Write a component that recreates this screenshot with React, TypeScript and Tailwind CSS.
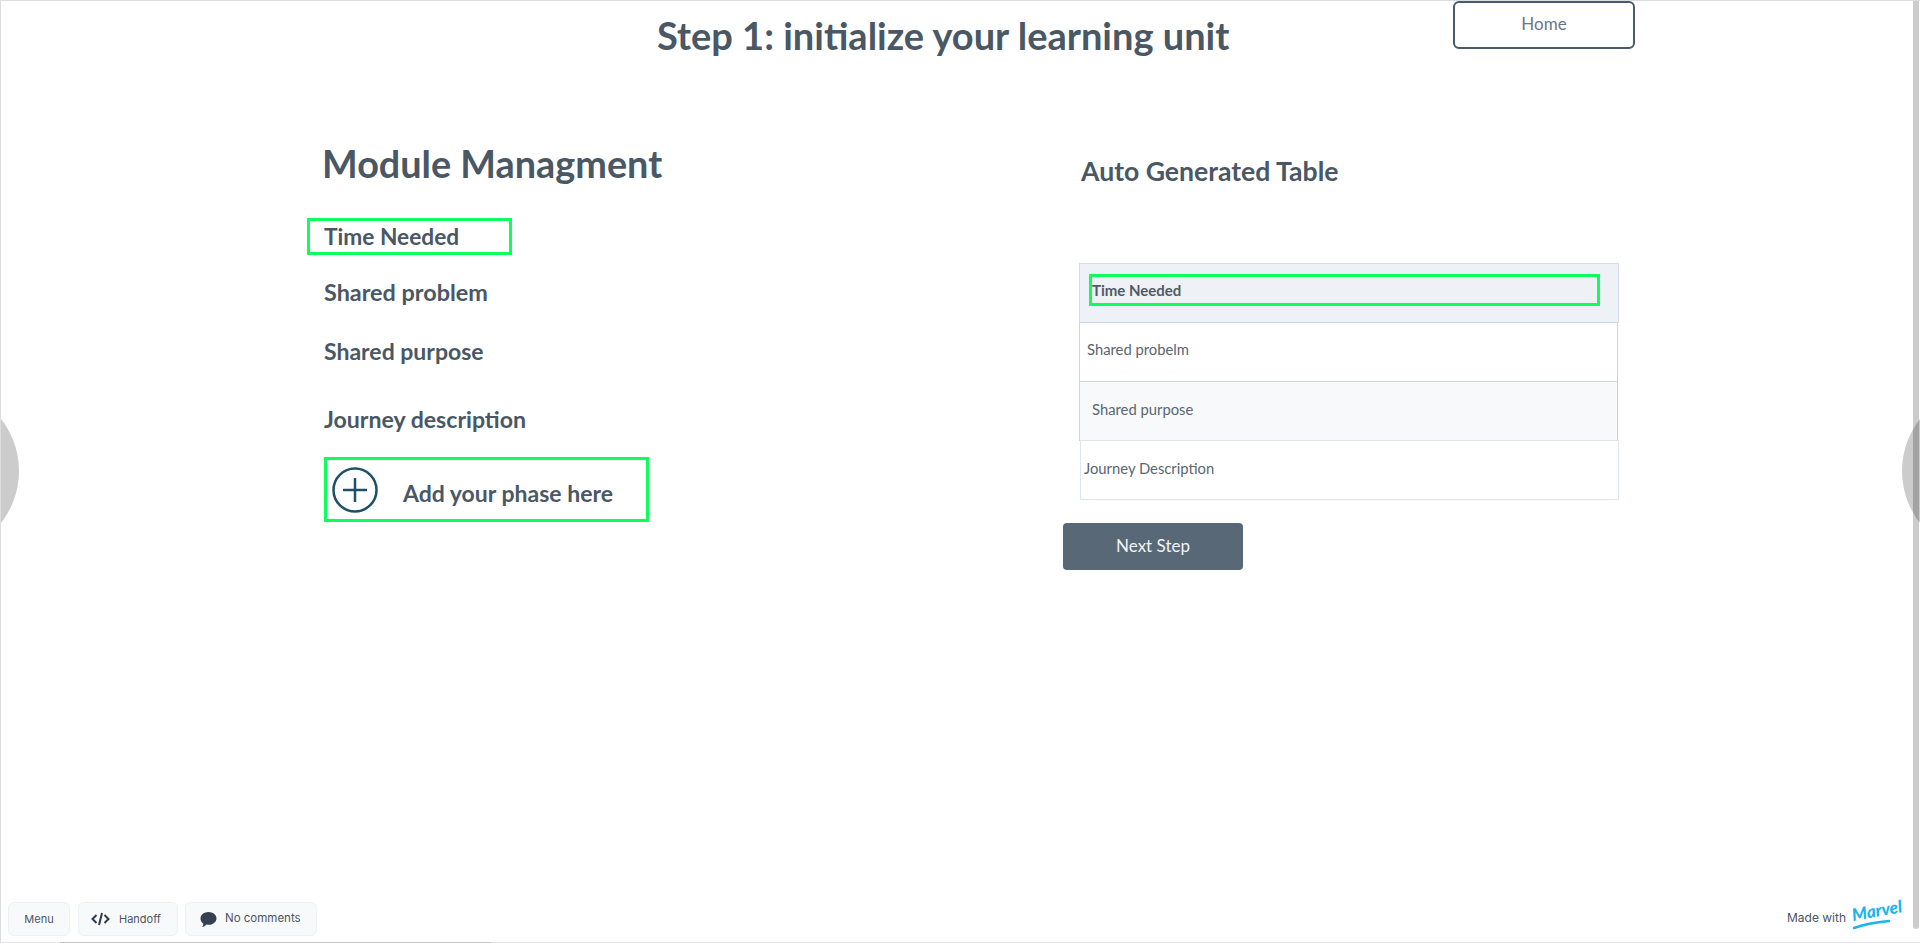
const lato = "font-['Lato','Liberation_Sans',sans-serif]";

function SideLabel({ children, className = "" }: { children: React.ReactNode; className?: string }) {
  return <div className={`font-bold leading-[30px] text-[#4a5765] ${className}`}>{children}</div>;
}

function Row({ children, className = "", text = "" }: { children: React.ReactNode; className?: string; text?: string }) {
  return (
    <div className={`h-[60px] border border-[#ccd6e2] ${className}`}>
      <div className={`text-[14.8px] leading-[20px] text-[#5a6672] ${text}`}>{children}</div>
    </div>
  );
}

function ToolButton({ children, className = "" }: { children: React.ReactNode; className?: string }) {
  return (
    <div className={`flex h-[34px] items-center rounded-[6px] border border-[#eef0f3] bg-[#f8f9fb] text-[11px] text-[#4b5563] font-['Inter',sans-serif] ${className}`}>
      {children}
    </div>
  );
}

export default function App() {
  return (
    <div className={`relative h-[943px] w-full overflow-hidden border-l border-t border-[#dcdde1] bg-white ${lato}`}>
      {/* header */}
      <div className="flex h-[48px] items-start">
        <h1 className="ml-[656px] mt-[10px] w-[700px] text-[38px] font-bold leading-[48px] text-[#4a5765] text-nowrap">
          Step 1: initialize your learning unit
        </h1>
        <div className="ml-[96px] flex h-[48px] w-[182px] items-center justify-center rounded-[6px] border-2 border-[#4a5a69] pb-[2px] text-[17px] text-[#6b7682]">
          Home
        </div>
      </div>

      <div className="flex">
        {/* left column */}
        <div className="ml-[306px] w-[756px] pt-[92px]">
          <div className="ml-[15px] text-[37.8px] font-bold leading-[46px] text-[#4a5765]">Module Managment</div>
          <div className="mt-[31px] h-[37px] w-[205px] border-[3px] border-[#0dff5c] pl-[14px] pt-px">
            <SideLabel className="text-[22.7px]">Time Needed</SideLabel>
          </div>
          <SideLabel className="ml-[17px] mt-[22px] text-[23.4px]">Shared problem</SideLabel>
          <SideLabel className="ml-[17px] mt-[29px] text-[23px]">Shared purpose</SideLabel>
          <SideLabel className="ml-[17px] mt-[38px] text-[23.1px]">Journey description</SideLabel>
          <div className="ml-[17px] mt-[23px] flex h-[65px] w-[325px] items-center border-[3px] border-[#0dff5c] pl-[5px]">
            <svg width="46" height="46" viewBox="0 0 46 46" fill="none" stroke="#1f5069" strokeWidth="2.5" className="mt-[1px] shrink-0">
              <circle cx="23" cy="23" r="21.5" />
              <path d="M23 11v24M11 23h24" strokeWidth="2.5" />
            </svg>
            <span className="ml-[25px] pt-[7px] text-[23px] font-bold text-[#4a5765]">Add your phase here</span>
          </div>
        </div>

        {/* right column */}
        <div className="w-[556px] pt-[100px]">
          <div className="ml-[18px] text-[26.6px] font-bold leading-[44px] text-[#4a5765]">Auto Generated Table</div>
          <div className="ml-[16px] mt-[70px] w-[540px]">
            <div className="h-[60px] border border-[#d5dce6] bg-[#eef1f6] pl-[9px] pt-[10px]">
              <div className="h-[32px] w-[511px] border-[3px] border-[#0dff5c] pt-[3px] text-[15px] font-bold leading-[20px] text-[#4f5b67]">
                Time Needed
              </div>
            </div>
            <Row className="-mt-px w-[539px] pt-[16px]" text="pl-[7px]">Shared probelm</Row>
            <Row className="-mt-px w-[539px] bg-[#f8f9fb] pt-[17px]" text="pl-[12px]">Shared purpose</Row>
            <Row className="-mt-px ml-px border-[#dfe5ec] pt-[17px]" text="pl-[3px]">Journey Description</Row>
          </div>
          <div className="mt-[23px] flex h-[47px] w-[180px] items-center justify-center rounded-[4px] bg-[#586876] pb-[2px] text-[17px] text-[#f1f3f5]">
            Next Step
          </div>
        </div>
      </div>

      {/* overlays */}
      <div className="absolute left-[-150px] top-[386px] h-[168px] w-[168px] rounded-full bg-black/20" />
      <div className="absolute right-[-150px] top-[386px] h-[168px] w-[168px] rounded-full bg-black/20" />
      <div className="absolute right-px top-0 z-10 h-[928px] w-1.5 rounded-b-[3px] bg-black/20" />
      <div className="absolute bottom-0 left-0 right-0 h-px bg-[#e4e5e8]" />
      <div className="absolute bottom-0 left-[59px] h-px w-[431px] bg-[#c4c4c8]" />

      <div className="absolute bottom-[7px] left-[7px] flex">
        <ToolButton className="w-[62px] justify-center">Menu</ToolButton>
        <ToolButton className="ml-[8px] w-[100px] pl-[12px]">
          <svg width="19" height="14" viewBox="0 0 19 14" fill="none" stroke="#2f3b4a" strokeWidth="2">
            <path d="M5.500 3 1.500 7l4 4M13.500 3l4 4-4 4M11 1 8 13" />
          </svg>
          <span className="ml-[9px]">Handoff</span>
        </ToolButton>
        <ToolButton className="ml-[7px] w-[132px] pl-[14px]">
          <svg width="17" height="17" viewBox="0 0 16 16" fill="#36404e">
            <path d="M8 1c4 0 7.500 2.600 7.500 6S12 13 8 13c-.7 0-1.300-.1-2-.2C5 14 3.500 15 2 15c.8-.9 1.200-2 1.200-3C1.500 10.900.5 9.100.5 7 .5 3.600 4 1 8 1Z" />
          </svg>
          <span className="ml-[8px] text-[11.5px]">No comments</span>
        </ToolButton>
      </div>

      <div className="absolute bottom-[13px] right-[21px] flex items-center">
        <span className="text-[12px] text-[#4b5563] font-['Inter',sans-serif]">Made with</span>
        <div className="relative ml-[5px] h-[24px] w-[48px]">
          <span className="absolute left-[1px] top-[-1px] origin-left -rotate-[10deg] text-[17px] font-black italic leading-[20px] text-[#19b5f1]">Marvel</span>
          <svg width="48" height="24" viewBox="0 0 48 24" fill="none" stroke="#19b5f1" strokeWidth="2.500" strokeLinecap="round" className="absolute left-0 top-0">
            <path d="M3 22C14 18 28 16 38 15" />
          </svg>
        </div>
      </div>
    </div>
  );
}
